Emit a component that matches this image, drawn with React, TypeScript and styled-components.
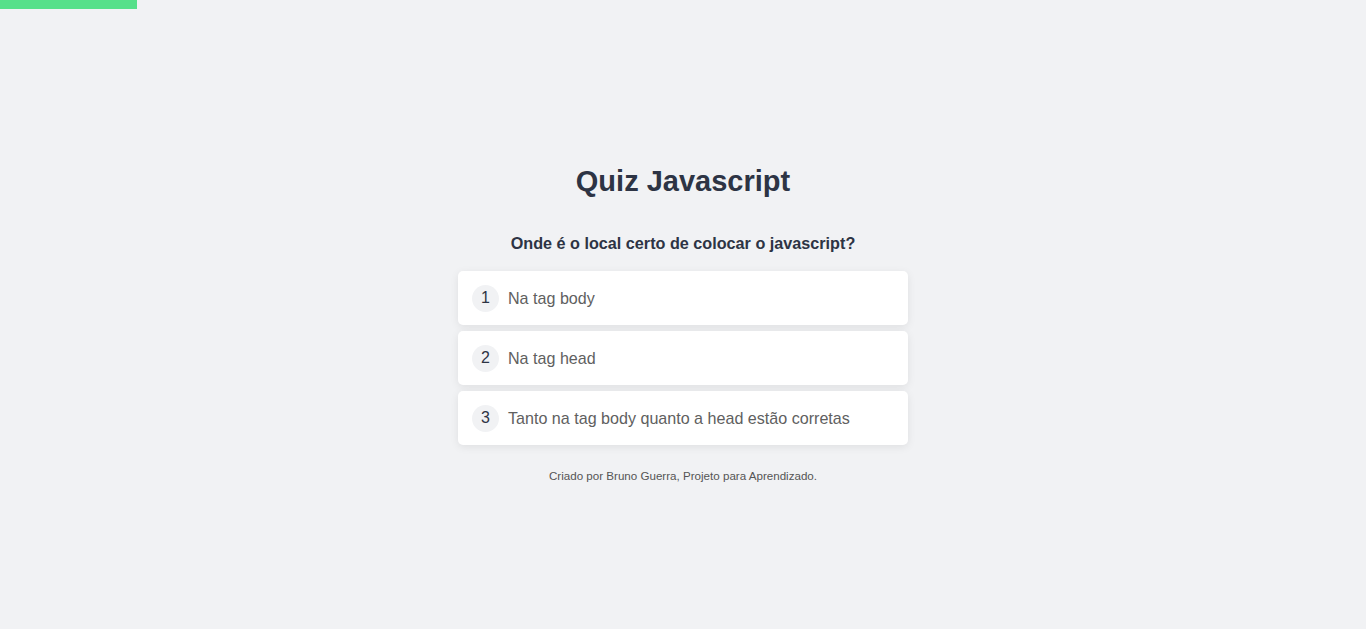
import styled, { createGlobalStyle } from "styled-components";

const GlobalStyle = createGlobalStyle`
    * { box-sizing: border-box; }
    body {
        margin: 0;
        background: #f1f2f4;
        font-family: "Liberation Sans", Arial, sans-serif;
    }
`;

const Progress = styled.div`
    position: fixed;
    top: 0;
    left: 0;
    height: 9px;
    background: #56e08a;
`;

const Container = styled.main`
    max-width: 450px;
    margin: 0 auto;
    padding-top: 163px;
    display: flex;
    flex-direction: column;
`;

const Title = styled.h1`
    margin: 0 0 34px;
    font-size: 29px;
    line-height: 36px;
    text-align: center;
    color: #2d3444;
`;

const Question = styled.h2`
    margin: 0 0 18px;
    font-size: 16.2px;
    line-height: 20px;
    text-align: center;
    color: #2d3444;
`;

const Options = styled.ul`
    list-style: none;
    margin: 0;
    padding: 0;
    display: flex;
    flex-direction: column;
    gap: 6px;
`;

const Option = styled.li`
    height: 54px;
    display: flex;
    align-items: center;
    gap: 9px;
    padding: 0 14px;
    background: #fff;
    border-radius: 5px;
    box-shadow: 0 2px 8px rgba(0, 0, 0, 0.08);
    font-size: 16.1px;
    color: #606060;
    cursor: pointer;
`;

const Number = styled.span`
    width: 27px;
    height: 27px;
    border-radius: 50%;
    background: #f1f2f4;
    color: #2d3444;
    display: flex;
    align-items: center;
    justify-content: center;
    font-size: 16px;
`;

const Footer = styled.p`
    margin: 23px 0 0;
    font-size: 11.6px;
    line-height: 16px;
    text-align: center;
    color: #555;
`;

const options = [
    "Na tag body",
    "Na tag head",
    "Tanto na tag body quanto a head estão corretas",
];

function App() {
    const progress = 10;
    return (
        <>
            <GlobalStyle />
            <Progress style={{ width: `${progress}%` }} />
            <Container>
                <Title>Quiz Javascript</Title>
                <Question>Onde é o local certo de colocar o javascript?</Question>
                <Options>
                    {options.map((text, i) => (
                        <Option key={text}>
                            <Number>{i + 1}</Number>
                            {text}
                        </Option>
                    ))}
                </Options>
                <Footer>Criado por Bruno Guerra, Projeto para Aprendizado.</Footer>
            </Container>
        </>
    );
}

export default App;
